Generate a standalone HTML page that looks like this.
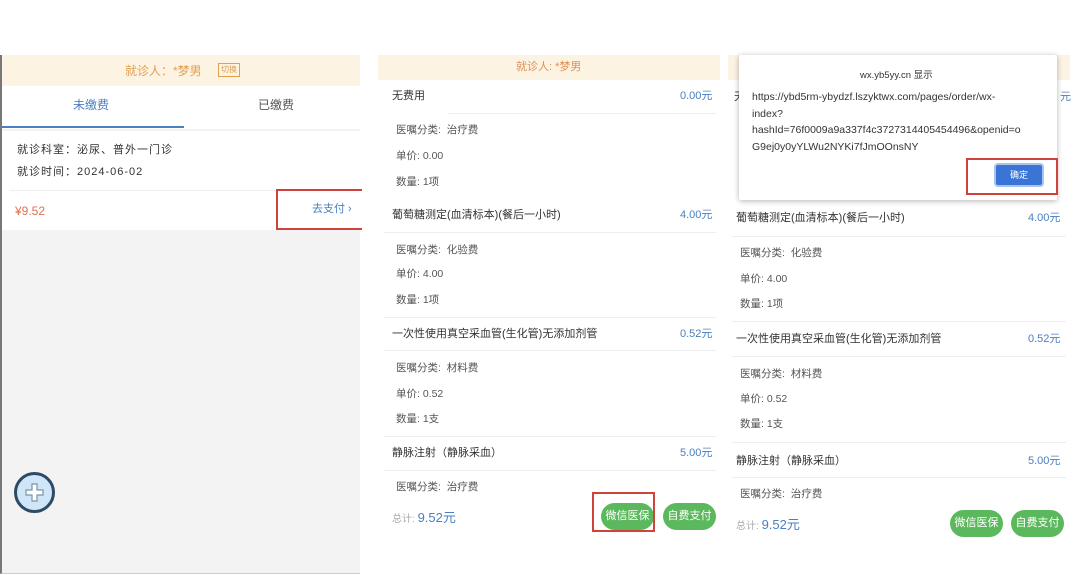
<!DOCTYPE html>
<html><head><meta charset="utf-8"><style>
*{margin:0;padding:0;box-sizing:border-box}
body{width:1080px;height:575px;background:#fff;position:relative;overflow:hidden;font-family:"Liberation Sans","Noto Sans CJK SC",sans-serif;font-size:11px;color:#333}
.a{position:absolute;white-space:nowrap;line-height:1}
.t{font-size:11px;color:#333}
.s{font-size:10.5px;color:#555}
.p{font-size:11px;color:#4a7fc1}
.hr{position:absolute;height:1px;background:#eee}
.btn{position:absolute;background:#5cb85c;color:#fff;border-radius:14px;font-size:11px;text-align:center;line-height:27px;height:27px;width:53px}
.red{position:absolute;border:2px solid #d0433a}
</style></head><body>
<!-- left panel -->
<div class="a" style="left:0;top:55px;width:360px;height:519px;background:#f3f3f3;border-left:2px solid #777;border-bottom:1px solid #ccc"></div>
<div class="a" style="left:2px;top:55px;width:358px;height:31px;background:#fdf3e3"></div>
<div class="a" style="left:125px;top:65px;font-size:12px;color:#e0a050">就诊人：*梦男</div>
<div class="a" style="left:218px;top:63px;border:1px solid #e0a050;color:#e0a050;font-size:8px;padding:2px 2px">切换</div>
<div class="a" style="left:2px;top:86px;width:358px;height:43px;background:#fff"></div>
<div class="a" style="left:73px;top:99px;font-size:12px;color:#4a7fc1">未缴费</div>
<div class="a" style="left:258px;top:99px;font-size:12px;color:#555">已缴费</div>
<div class="a" style="left:2px;top:126px;width:182px;height:2px;background:#4a7fc1"></div>
<div class="a" style="left:2px;top:131px;width:358px;height:99px;background:#fff"></div>
<div class="a" style="left:17px;top:145px;font-size:11px;color:#333;letter-spacing:1px">就诊科室：泌尿、普外一门诊</div>
<div class="a" style="left:17px;top:167px;font-size:11px;color:#333;letter-spacing:1px">就诊时间：2024-06-02</div>
<div class="hr" style="left:10px;top:190px;width:350px"></div>
<div class="a" style="left:15px;top:205px;font-size:12px;color:#e07050">¥9.52</div>
<div class="a" style="left:312px;top:204px;font-size:11px;color:#4a7fc1">去支付 ›</div>
<div class="red" style="left:276px;top:189px;width:86px;height:41px;border-right:none"></div>
<div class="a" style="left:14px;top:472px;width:41px;height:41px;border-radius:50%;border:3px solid #2d4a66;background:#cfe6f8"></div>
<div class="a" style="left:25px;top:483px;width:19px;height:19px">
<svg width="19" height="19" viewBox="0 0 19 19"><path d="M7 1h5v6h6v5h-6v6H7v-6H1V7h6z" fill="#fff" stroke="#7a93a8" stroke-width="1.2"/></svg></div>

<!-- middle panel -->
<div class="a" style="left:378px;top:55px;width:342px;height:25px;background:#fdf3e3"></div>
<div class="a" style="left:516px;top:62px;font-size:11px;color:#e09050">就诊人: *梦男</div>
<div class="a t" style="left:392px;top:91px">无费用</div><div class="a p" style="left:680px;top:91px">0.00元</div>
<div class="hr" style="left:448px;top:113px;width:268px"></div>
<div class="a s" style="left:396px;top:125px">医嘱分类: &nbsp;治疗费</div>
<div class="a s" style="left:396px;top:151px">单价: 0.00</div>
<div class="a s" style="left:396px;top:177px">数量: 1项</div>
<div class="a t" style="left:392px;top:210px">葡萄糖测定(血清标本)(餐后一小时)</div><div class="a p" style="left:680px;top:210px">4.00元</div>
<div class="hr" style="left:384px;top:232px;width:332px"></div>
<div class="a s" style="left:396px;top:245px">医嘱分类: &nbsp;化验费</div>
<div class="a s" style="left:396px;top:269px">单价: 4.00</div>
<div class="a s" style="left:396px;top:295px">数量: 1项</div>
<div class="hr" style="left:384px;top:317px;width:332px"></div>
<div class="a t" style="left:392px;top:329px">一次性使用真空采血管(生化管)无添加剂管</div><div class="a p" style="left:680px;top:329px">0.52元</div>
<div class="hr" style="left:384px;top:350px;width:332px"></div>
<div class="a s" style="left:396px;top:363px">医嘱分类: &nbsp;材料费</div>
<div class="a s" style="left:396px;top:389px">单价: 0.52</div>
<div class="a s" style="left:396px;top:414px">数量: 1支</div>
<div class="hr" style="left:384px;top:436px;width:332px"></div>
<div class="a t" style="left:392px;top:448px">静脉注射（静脉采血）</div><div class="a p" style="left:680px;top:448px">5.00元</div>
<div class="hr" style="left:384px;top:470px;width:332px"></div>
<div class="a s" style="left:396px;top:482px">医嘱分类: &nbsp;治疗费</div>
<div class="a" style="left:392px;top:511px;font-size:10px;color:#aaa">总计: <span style="font-size:13px;color:#4a7fc1">9.52元</span></div>
<div class="btn" style="left:601px;top:503px">微信医保</div>
<div class="btn" style="left:663px;top:503px">自费支付</div>
<div class="red" style="left:592px;top:492px;width:63px;height:40px"></div>

<!-- right panel -->
<div class="a" style="left:728px;top:55px;width:342px;height:25px;background:#fdf3e3"></div>
<div class="a t" style="left:736px;top:213px">葡萄糖测定(血清标本)(餐后一小时)</div><div class="a p" style="left:1028px;top:213px">4.00元</div>
<div class="hr" style="left:732px;top:236px;width:334px"></div>
<div class="a s" style="left:740px;top:248px">医嘱分类: &nbsp;化验费</div>
<div class="a s" style="left:740px;top:274px">单价: 4.00</div>
<div class="a s" style="left:740px;top:299px">数量: 1项</div>
<div class="hr" style="left:732px;top:321px;width:334px"></div>
<div class="a t" style="left:736px;top:334px">一次性使用真空采血管(生化管)无添加剂管</div><div class="a p" style="left:1028px;top:334px">0.52元</div>
<div class="hr" style="left:732px;top:356px;width:334px"></div>
<div class="a s" style="left:740px;top:369px">医嘱分类: &nbsp;材料费</div>
<div class="a s" style="left:740px;top:394px">单价: 0.52</div>
<div class="a s" style="left:740px;top:419px">数量: 1支</div>
<div class="hr" style="left:732px;top:442px;width:334px"></div>
<div class="a t" style="left:736px;top:456px">静脉注射（静脉采血）</div><div class="a p" style="left:1028px;top:456px">5.00元</div>
<div class="hr" style="left:732px;top:477px;width:334px"></div>
<div class="a s" style="left:740px;top:489px">医嘱分类: &nbsp;治疗费</div>
<div class="a" style="left:736px;top:518px;font-size:10px;color:#aaa">总计: <span style="font-size:13px;color:#4a7fc1">9.52元</span></div>
<div class="btn" style="left:950px;top:510px">微信医保</div>
<div class="btn" style="left:1011px;top:510px">自费支付</div>
<div class="a t" style="left:734px;top:92px">无</div>
<div class="a p" style="left:1060px;top:92px">元</div>
<!-- dialog -->
<div class="a" style="left:739px;top:55px;width:318px;height:145px;background:#fff;box-shadow:0 1px 6px rgba(0,0,0,.3);border-radius:2px"></div>
<div class="a" style="left:860px;top:71px;font-size:9.5px;color:#333">wx.yb5yy.cn 显示</div>
<div class="a" style="left:752px;top:89px;font-size:10.5px;color:#333;line-height:16.5px;white-space:normal;width:300px;word-break:break-all">https://ybd5rm-ybydzf.lszyktwx.com/pages/order/wx-<br>index?<br>hashId=76f0009a9a337f4c3727314405454496&amp;openid=o<br>G9ej0y0yYLWu2NYKi7fJmOOnsNY</div>
<div class="a" style="left:994px;top:163px;width:50px;height:24px;background:#3a75d6;border:2px solid #a8c4ef;border-radius:4px;color:#fff;font-size:9px;text-align:center;line-height:20px">确定</div>
<div class="red" style="left:966px;top:158px;width:92px;height:37px"></div>
</body></html>
